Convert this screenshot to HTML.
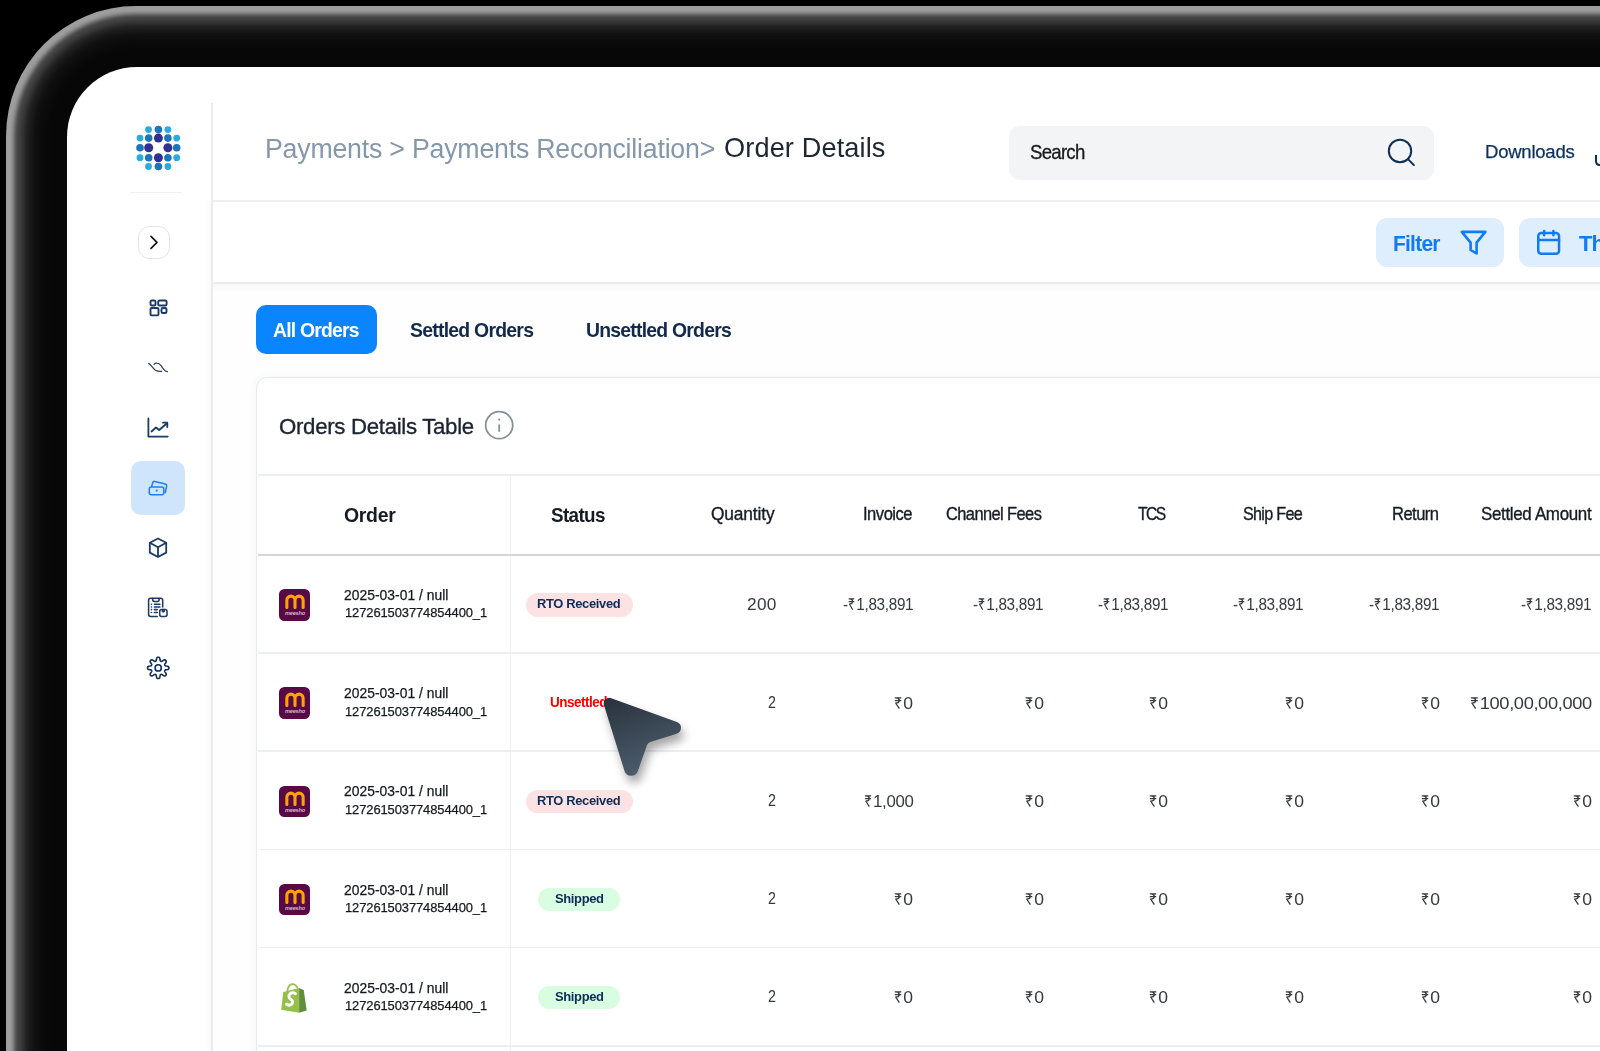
<!DOCTYPE html>
<html><head><meta charset="utf-8">
<style>
*{margin:0;padding:0;box-sizing:border-box}
html,body{width:1600px;height:1051px;overflow:hidden;background:#000;font-family:"Liberation Sans",sans-serif}
.a{position:absolute}
.sh{position:absolute;width:1800px;height:1300px}
.t{position:absolute;white-space:nowrap;line-height:1;transform-origin:0 0}
</style></head>
<body>
<div class="sh" style="left:6px;top:6px;border-radius:130px;background:rgb(158,158,158)"></div>
<div class="sh" style="left:14px;top:14px;border-radius:122px;background:rgb(68,68,68);filter:blur(2px)"></div>
<div class="sh" style="left:23px;top:23px;border-radius:113px;background:rgb(34,34,34);filter:blur(3px)"></div>
<div class="sh" style="left:31px;top:31px;border-radius:105px;background:rgb(14,14,14);filter:blur(4px)"></div>
<div class="sh" style="left:44px;top:44px;border-radius:92px;background:rgb(7,7,7);filter:blur(5px)"></div>
<div class="sh" style="left:67px;top:67px;border-radius:70px;background:#fff"></div>
<svg width="0" height="0" style="position:absolute"><defs>
<symbol id="rp" viewBox="0 0 7 12"><path d="M0.2 0.8 H6.8 M0.2 3.6 H6.8 M1.6 0.8 C5.6 0.8 6 6 1.2 6 L4.8 11.6" fill="none" stroke="currentColor" stroke-width="1.25" stroke-linejoin="round"/></symbol>
</defs></svg>
<div class="a" style="left:213px;top:200px;width:1400px;height:1.5px;background:#eceef1"></div>
<div class="t" style="left:264.5px;top:134.69px;font-size:27.18px;color:#8597aa;letter-spacing:-0.22px;transform:scaleX(0.9838);">Payments &gt; Payments Reconciliation&gt;</div>
<div class="t" style="left:723.7px;top:134.94px;font-size:26.89px;color:#1c2733;letter-spacing:0.13px;transform:scaleX(1.0098);">Order Details</div>
<div class="a" style="left:1009px;top:126px;width:425px;height:54px;border-radius:11px;background:#f2f4f6"></div>
<div class="t" style="left:1029.89px;top:141.58px;font-size:19.99px;color:#17191c;letter-spacing:-0.81px;transform:scaleX(0.9320);-webkit-text-stroke:0.3px #17191c;">Search</div>
<svg class="a" style="left:1384px;top:135px" width="36" height="36" fill="none" stroke="#0f2d55" stroke-width="2" stroke-linecap="round"><circle cx="16" cy="16" r="11.2"/><path d="M24.2 24.4 L29.9 30.1"/></svg>
<div class="t" style="left:1484.62px;top:142.81px;font-size:18.9px;color:#0d2f5e;letter-spacing:-0.23px;transform:scaleX(0.9797);-webkit-text-stroke:0.25px #0d2f5e;">Downloads</div>
<svg class="a" style="left:1590px;top:150px" width="12" height="20" fill="none" stroke="#0d2f5e" stroke-width="2"><path d="M6 5 V11 C6 13.5 7.5 15 10 15 C12.5 15 14 13.5 14 11 V5"/></svg>
<div class="a" style="left:213px;top:282px;width:1400px;height:1.5px;background:#e8eaed"></div>
<div class="a" style="left:213px;top:283.5px;width:1400px;height:800px;background:#fefefe"></div>
<div class="a" style="left:213px;top:283.5px;width:1400px;height:10px;background:linear-gradient(rgba(0,0,0,.022),rgba(0,0,0,0))"></div>
<div class="a" style="left:1376px;top:218px;width:128px;height:49px;border-radius:11px;background:#dfeefd"></div>
<svg class="a" style="left:1458px;top:228px" width="32" height="30" fill="none" stroke="#0f7bf5" stroke-width="2.6" stroke-linejoin="round"><path d="M3.8 3.9 H27.3 L18.6 14.6 V25.5 L12.6 22 V14.6 Z"/></svg>
<div class="a" style="left:1519px;top:218px;width:200px;height:49px;border-radius:11px;background:#dfeefd"></div>
<svg class="a" style="left:1534px;top:227px" width="30" height="30" fill="none" stroke="#0f7bf5" stroke-width="2.5" stroke-linecap="round" stroke-linejoin="round"><rect x="4.25" y="6" width="20.8" height="20.75" rx="3"/><path d="M4.25 13 H25.05 M10.1 4.1 V8.3 M19.4 4.1 V8.3"/></svg>
<div class="t" style="left:1392.7px;top:232.38px;font-size:22.82px;color:#0f7bf5;font-weight:bold;letter-spacing:-0.83px;transform:scaleX(0.9197);">Filter</div>
<div class="t" style="left:1579px;top:232.38px;font-size:22.82px;color:#0f7bf5;font-weight:bold;letter-spacing:-0.95px;transform:scaleX(0.9648);">Th</div>
<div class="a" style="left:256px;top:305px;width:121px;height:49px;border-radius:10px;background:#0a84ff"></div>
<div class="t" style="left:273px;top:319.16px;font-size:21.08px;color:#fff;font-weight:bold;letter-spacing:-0.85px;transform:scaleX(0.9188);">All Orders</div>
<div class="t" style="left:410px;top:319.16px;font-size:21.08px;color:#10294d;font-weight:bold;letter-spacing:-0.82px;transform:scaleX(0.9210);">Settled Orders</div>
<div class="t" style="left:586px;top:319.16px;font-size:21.08px;color:#10294d;font-weight:bold;letter-spacing:-0.84px;transform:scaleX(0.9202);">Unsettled Orders</div>
<div class="a" style="left:256px;top:376.5px;width:1500px;height:800px;border-radius:11px;background:#fff;border:1px solid #e6e9ee;box-shadow:0 0 10px rgba(30,50,80,.05)"></div>
<svg class="a" style="left:482px;top:408px" width="34" height="34" fill="none" stroke="#858e99" stroke-width="1.75" stroke-linecap="round"><circle cx="17.2" cy="17.2" r="13.5"/><path d="M17.2 17.2 V23"/><circle cx="17.2" cy="11.6" r="1.1" fill="#858e99" stroke="none"/></svg>
<div class="a" style="left:258px;top:474px;width:1400px;height:1.5px;background:#eceef1"></div>
<div class="a" style="left:509.5px;top:475px;width:1.3px;height:600px;background:#eff1f3"></div>
<div class="a" style="left:258px;top:554px;width:1400px;height:2px;background:#d3d7dc"></div>
<div class="t" style="left:278.92px;top:415.12px;font-size:22.89px;color:#1c2430;letter-spacing:-0.31px;transform:scaleX(0.9712);-webkit-text-stroke:0.35px #1c2430;">Orders Details Table</div>
<div class="t" style="left:343.75px;top:504.83px;font-size:19.99px;color:#161c24;font-weight:bold;letter-spacing:-0.33px;transform:scaleX(0.9749);">Order</div>
<div class="t" style="left:551px;top:504.83px;font-size:19.99px;color:#161c24;font-weight:bold;letter-spacing:-0.66px;transform:scaleX(0.9433);">Status</div>
<div class="t" style="left:711.17px;top:506.11px;font-size:17.59px;color:#161c24;letter-spacing:-0.13px;transform:scaleX(0.9857);-webkit-text-stroke:0.35px #161c24;">Quantity</div>
<div class="t" style="left:862.56px;top:506.11px;font-size:17.59px;color:#161c24;letter-spacing:-0.51px;transform:scaleX(0.9419);-webkit-text-stroke:0.35px #161c24;">Invoice</div>
<div class="t" style="left:946.06px;top:506.11px;font-size:17.59px;color:#161c24;letter-spacing:-0.62px;transform:scaleX(0.9342);-webkit-text-stroke:0.35px #161c24;">Channel Fees</div>
<div class="t" style="left:1138.16px;top:506.11px;font-size:17.59px;color:#161c24;letter-spacing:-1.73px;transform:scaleX(0.8920);-webkit-text-stroke:0.35px #161c24;">TCS</div>
<div class="t" style="left:1243.16px;top:506.11px;font-size:17.59px;color:#161c24;letter-spacing:-0.77px;transform:scaleX(0.9178);-webkit-text-stroke:0.35px #161c24;">Ship Fee</div>
<div class="t" style="left:1391.76px;top:506.11px;font-size:17.59px;color:#161c24;letter-spacing:-0.58px;transform:scaleX(0.9428);-webkit-text-stroke:0.35px #161c24;">Return</div>
<div class="t" style="left:1481.17px;top:506.11px;font-size:17.59px;color:#161c24;letter-spacing:-0.33px;transform:scaleX(0.9626);-webkit-text-stroke:0.35px #161c24;">Settled Amount</div>
<div class="a" style="left:258px;top:1045px;width:1400px;height:1.5px;background:#eceef1"></div>
<div class="a" style="left:278.5px;top:589.2px;width:31.8px;height:31.6px;border-radius:5.5px;background:#570a45"></div>
<svg class="a" style="left:278.5px;top:589.2px" width="32" height="32"><path d="M7.85 18.5 V11.2 A4.07 4.07 0 0 1 16 11.2 V18.5 M16 11.2 A4.07 4.07 0 0 1 24.15 11.2 V18.5" fill="none" stroke="#ffa300" stroke-width="3.1" stroke-linecap="round"/><text x="16" y="25.6" font-size="5.6" font-style="italic" font-weight="bold" font-family="Liberation Sans" fill="#d9b3cc" text-anchor="middle" letter-spacing="-.2">meesho</text></svg>
<div class="t" style="left:343.93px;top:589.01px;font-size:13.81px;color:#15191f;letter-spacing:0.03px;transform:scaleX(1.0039);-webkit-text-stroke:0.25px #15191f;">2025-03-01 / null</div>
<div class="t" style="left:344.62px;top:606.43px;font-size:13.08px;color:#15191f;letter-spacing:-0.09px;transform:scaleX(0.9887);-webkit-text-stroke:0.25px #15191f;">127261503774854400_1</div>
<div class="a" style="left:525.6px;top:593.25px;width:107.3px;height:23.6px;border-radius:12px;background:#fde2e4"></div>
<div class="t" style="left:537.4px;top:597.1px;font-size:13.59px;color:#0c2d5a;font-weight:bold;letter-spacing:-0.37px;transform:scaleX(0.9533);">RTO Received</div>
<div class="t" style="left:746.6px;top:596.53px;font-size:16.86px;color:#353a40;letter-spacing:0.32px;transform:scaleX(1.0223);">200</div>
<div class="t" style="right:687px;top:596.41px;font-size:17px;color:#353a40;letter-spacing:-.35px;transform-origin:100% 0;transform:scaleX(0.8987)"><span>-</span><svg width="7" height="12" style="display:inline-block;vertical-align:baseline;margin-right:1.8px;margin-left:.8px;color:#353a40"><use href="#rp"/></svg><span>1,83,891</span></div>
<div class="t" style="right:556.7px;top:596.41px;font-size:17px;color:#353a40;letter-spacing:-.35px;transform-origin:100% 0;transform:scaleX(0.8987)"><span>-</span><svg width="7" height="12" style="display:inline-block;vertical-align:baseline;margin-right:1.8px;margin-left:.8px;color:#353a40"><use href="#rp"/></svg><span>1,83,891</span></div>
<div class="t" style="right:432px;top:596.41px;font-size:17px;color:#353a40;letter-spacing:-.35px;transform-origin:100% 0;transform:scaleX(0.8987)"><span>-</span><svg width="7" height="12" style="display:inline-block;vertical-align:baseline;margin-right:1.8px;margin-left:.8px;color:#353a40"><use href="#rp"/></svg><span>1,83,891</span></div>
<div class="t" style="right:296.25px;top:596.41px;font-size:17px;color:#353a40;letter-spacing:-.35px;transform-origin:100% 0;transform:scaleX(0.8987)"><span>-</span><svg width="7" height="12" style="display:inline-block;vertical-align:baseline;margin-right:1.8px;margin-left:.8px;color:#353a40"><use href="#rp"/></svg><span>1,83,891</span></div>
<div class="t" style="right:160.3px;top:596.41px;font-size:17px;color:#353a40;letter-spacing:-.35px;transform-origin:100% 0;transform:scaleX(0.8987)"><span>-</span><svg width="7" height="12" style="display:inline-block;vertical-align:baseline;margin-right:1.8px;margin-left:.8px;color:#353a40"><use href="#rp"/></svg><span>1,83,891</span></div>
<div class="t" style="right:8.4px;top:596.41px;font-size:17px;color:#353a40;letter-spacing:-.35px;transform-origin:100% 0;transform:scaleX(0.8987)"><span>-</span><svg width="7" height="12" style="display:inline-block;vertical-align:baseline;margin-right:1.8px;margin-left:.8px;color:#353a40"><use href="#rp"/></svg><span>1,83,891</span></div>
<div class="a" style="left:258px;top:652.2px;width:1400px;height:1.5px;background:#eceef1"></div>
<div class="a" style="left:278.5px;top:687.4px;width:31.8px;height:31.6px;border-radius:5.5px;background:#570a45"></div>
<svg class="a" style="left:278.5px;top:687.4px" width="32" height="32"><path d="M7.85 18.5 V11.2 A4.07 4.07 0 0 1 16 11.2 V18.5 M16 11.2 A4.07 4.07 0 0 1 24.15 11.2 V18.5" fill="none" stroke="#ffa300" stroke-width="3.1" stroke-linecap="round"/><text x="16" y="25.6" font-size="5.6" font-style="italic" font-weight="bold" font-family="Liberation Sans" fill="#d9b3cc" text-anchor="middle" letter-spacing="-.2">meesho</text></svg>
<div class="t" style="left:343.93px;top:687.21px;font-size:13.81px;color:#15191f;letter-spacing:0.03px;transform:scaleX(1.0039);-webkit-text-stroke:0.25px #15191f;">2025-03-01 / null</div>
<div class="t" style="left:344.62px;top:704.63px;font-size:13.08px;color:#15191f;letter-spacing:-0.09px;transform:scaleX(0.9887);-webkit-text-stroke:0.25px #15191f;">127261503774854400_1</div>
<div class="t" style="left:550px;top:694.95px;font-size:14.53px;color:#ff0000;font-weight:bold;letter-spacing:-0.55px;transform:scaleX(0.9293);">Unsettled</div>
<div class="t" style="left:768.1px;top:694.73px;font-size:16.86px;color:#353a40;letter-spacing:-0.73px;transform:scaleX(0.8442);">2</div>
<div class="t" style="right:686.98px;top:694.61px;font-size:17px;color:#353a40;letter-spacing:-.35px;transform-origin:100% 0;transform:scaleX(1.0333)"><svg width="7" height="12" style="display:inline-block;vertical-align:baseline;margin-right:1.8px;margin-left:.8px;color:#353a40"><use href="#rp"/></svg><span>0</span></div>
<div class="t" style="right:556.68px;top:694.61px;font-size:17px;color:#353a40;letter-spacing:-.35px;transform-origin:100% 0;transform:scaleX(1.0333)"><svg width="7" height="12" style="display:inline-block;vertical-align:baseline;margin-right:1.8px;margin-left:.8px;color:#353a40"><use href="#rp"/></svg><span>0</span></div>
<div class="t" style="right:431.98px;top:694.61px;font-size:17px;color:#353a40;letter-spacing:-.35px;transform-origin:100% 0;transform:scaleX(1.0333)"><svg width="7" height="12" style="display:inline-block;vertical-align:baseline;margin-right:1.8px;margin-left:.8px;color:#353a40"><use href="#rp"/></svg><span>0</span></div>
<div class="t" style="right:296.23px;top:694.61px;font-size:17px;color:#353a40;letter-spacing:-.35px;transform-origin:100% 0;transform:scaleX(1.0333)"><svg width="7" height="12" style="display:inline-block;vertical-align:baseline;margin-right:1.8px;margin-left:.8px;color:#353a40"><use href="#rp"/></svg><span>0</span></div>
<div class="t" style="right:160.28px;top:694.61px;font-size:17px;color:#353a40;letter-spacing:-.35px;transform-origin:100% 0;transform:scaleX(1.0333)"><svg width="7" height="12" style="display:inline-block;vertical-align:baseline;margin-right:1.8px;margin-left:.8px;color:#353a40"><use href="#rp"/></svg><span>0</span></div>
<div class="t" style="right:8.4px;top:694.61px;font-size:17px;color:#353a40;letter-spacing:-.35px;transform-origin:100% 0;transform:scaleX(1.0750)"><svg width="7" height="12" style="display:inline-block;vertical-align:baseline;margin-right:1.8px;margin-left:.8px;color:#353a40"><use href="#rp"/></svg><span>100,00,00,000</span></div>
<div class="a" style="left:258px;top:750.4px;width:1400px;height:1.5px;background:#eceef1"></div>
<div class="a" style="left:278.5px;top:785.6px;width:31.8px;height:31.6px;border-radius:5.5px;background:#570a45"></div>
<svg class="a" style="left:278.5px;top:785.6px" width="32" height="32"><path d="M7.85 18.5 V11.2 A4.07 4.07 0 0 1 16 11.2 V18.5 M16 11.2 A4.07 4.07 0 0 1 24.15 11.2 V18.5" fill="none" stroke="#ffa300" stroke-width="3.1" stroke-linecap="round"/><text x="16" y="25.6" font-size="5.6" font-style="italic" font-weight="bold" font-family="Liberation Sans" fill="#d9b3cc" text-anchor="middle" letter-spacing="-.2">meesho</text></svg>
<div class="t" style="left:343.93px;top:785.41px;font-size:13.81px;color:#15191f;letter-spacing:0.03px;transform:scaleX(1.0039);-webkit-text-stroke:0.25px #15191f;">2025-03-01 / null</div>
<div class="t" style="left:344.62px;top:802.83px;font-size:13.08px;color:#15191f;letter-spacing:-0.09px;transform:scaleX(0.9887);-webkit-text-stroke:0.25px #15191f;">127261503774854400_1</div>
<div class="a" style="left:525.6px;top:789.65px;width:107.3px;height:23.6px;border-radius:12px;background:#fde2e4"></div>
<div class="t" style="left:537.4px;top:793.5px;font-size:13.59px;color:#0c2d5a;font-weight:bold;letter-spacing:-0.37px;transform:scaleX(0.9533);">RTO Received</div>
<div class="t" style="left:768.1px;top:792.93px;font-size:16.86px;color:#353a40;letter-spacing:-0.73px;transform:scaleX(0.8442);">2</div>
<div class="t" style="right:687px;top:792.81px;font-size:17px;color:#353a40;letter-spacing:-.35px;transform-origin:100% 0;transform:scaleX(0.9880)"><svg width="7" height="12" style="display:inline-block;vertical-align:baseline;margin-right:1.8px;margin-left:.8px;color:#353a40"><use href="#rp"/></svg><span>1,000</span></div>
<div class="t" style="right:556.68px;top:792.81px;font-size:17px;color:#353a40;letter-spacing:-.35px;transform-origin:100% 0;transform:scaleX(1.0333)"><svg width="7" height="12" style="display:inline-block;vertical-align:baseline;margin-right:1.8px;margin-left:.8px;color:#353a40"><use href="#rp"/></svg><span>0</span></div>
<div class="t" style="right:431.98px;top:792.81px;font-size:17px;color:#353a40;letter-spacing:-.35px;transform-origin:100% 0;transform:scaleX(1.0333)"><svg width="7" height="12" style="display:inline-block;vertical-align:baseline;margin-right:1.8px;margin-left:.8px;color:#353a40"><use href="#rp"/></svg><span>0</span></div>
<div class="t" style="right:296.23px;top:792.81px;font-size:17px;color:#353a40;letter-spacing:-.35px;transform-origin:100% 0;transform:scaleX(1.0333)"><svg width="7" height="12" style="display:inline-block;vertical-align:baseline;margin-right:1.8px;margin-left:.8px;color:#353a40"><use href="#rp"/></svg><span>0</span></div>
<div class="t" style="right:160.28px;top:792.81px;font-size:17px;color:#353a40;letter-spacing:-.35px;transform-origin:100% 0;transform:scaleX(1.0333)"><svg width="7" height="12" style="display:inline-block;vertical-align:baseline;margin-right:1.8px;margin-left:.8px;color:#353a40"><use href="#rp"/></svg><span>0</span></div>
<div class="t" style="right:8.38px;top:792.81px;font-size:17px;color:#353a40;letter-spacing:-.35px;transform-origin:100% 0;transform:scaleX(1.0333)"><svg width="7" height="12" style="display:inline-block;vertical-align:baseline;margin-right:1.8px;margin-left:.8px;color:#353a40"><use href="#rp"/></svg><span>0</span></div>
<div class="a" style="left:258px;top:848.6px;width:1400px;height:1.5px;background:#eceef1"></div>
<div class="a" style="left:278.5px;top:883.8px;width:31.8px;height:31.6px;border-radius:5.5px;background:#570a45"></div>
<svg class="a" style="left:278.5px;top:883.8px" width="32" height="32"><path d="M7.85 18.5 V11.2 A4.07 4.07 0 0 1 16 11.2 V18.5 M16 11.2 A4.07 4.07 0 0 1 24.15 11.2 V18.5" fill="none" stroke="#ffa300" stroke-width="3.1" stroke-linecap="round"/><text x="16" y="25.6" font-size="5.6" font-style="italic" font-weight="bold" font-family="Liberation Sans" fill="#d9b3cc" text-anchor="middle" letter-spacing="-.2">meesho</text></svg>
<div class="t" style="left:343.93px;top:883.61px;font-size:13.81px;color:#15191f;letter-spacing:0.03px;transform:scaleX(1.0039);-webkit-text-stroke:0.25px #15191f;">2025-03-01 / null</div>
<div class="t" style="left:344.62px;top:901.03px;font-size:13.08px;color:#15191f;letter-spacing:-0.09px;transform:scaleX(0.9887);-webkit-text-stroke:0.25px #15191f;">127261503774854400_1</div>
<div class="a" style="left:538.4px;top:888px;width:81.7px;height:23.2px;border-radius:12px;background:#d9fde0"></div>
<div class="t" style="left:555.3px;top:891.85px;font-size:13.59px;color:#0c2d5a;font-weight:bold;letter-spacing:-0.38px;transform:scaleX(0.9561);">Shipped</div>
<div class="t" style="left:768.1px;top:891.13px;font-size:16.86px;color:#353a40;letter-spacing:-0.73px;transform:scaleX(0.8442);">2</div>
<div class="t" style="right:686.98px;top:891.01px;font-size:17px;color:#353a40;letter-spacing:-.35px;transform-origin:100% 0;transform:scaleX(1.0333)"><svg width="7" height="12" style="display:inline-block;vertical-align:baseline;margin-right:1.8px;margin-left:.8px;color:#353a40"><use href="#rp"/></svg><span>0</span></div>
<div class="t" style="right:556.68px;top:891.01px;font-size:17px;color:#353a40;letter-spacing:-.35px;transform-origin:100% 0;transform:scaleX(1.0333)"><svg width="7" height="12" style="display:inline-block;vertical-align:baseline;margin-right:1.8px;margin-left:.8px;color:#353a40"><use href="#rp"/></svg><span>0</span></div>
<div class="t" style="right:431.98px;top:891.01px;font-size:17px;color:#353a40;letter-spacing:-.35px;transform-origin:100% 0;transform:scaleX(1.0333)"><svg width="7" height="12" style="display:inline-block;vertical-align:baseline;margin-right:1.8px;margin-left:.8px;color:#353a40"><use href="#rp"/></svg><span>0</span></div>
<div class="t" style="right:296.23px;top:891.01px;font-size:17px;color:#353a40;letter-spacing:-.35px;transform-origin:100% 0;transform:scaleX(1.0333)"><svg width="7" height="12" style="display:inline-block;vertical-align:baseline;margin-right:1.8px;margin-left:.8px;color:#353a40"><use href="#rp"/></svg><span>0</span></div>
<div class="t" style="right:160.28px;top:891.01px;font-size:17px;color:#353a40;letter-spacing:-.35px;transform-origin:100% 0;transform:scaleX(1.0333)"><svg width="7" height="12" style="display:inline-block;vertical-align:baseline;margin-right:1.8px;margin-left:.8px;color:#353a40"><use href="#rp"/></svg><span>0</span></div>
<div class="t" style="right:8.38px;top:891.01px;font-size:17px;color:#353a40;letter-spacing:-.35px;transform-origin:100% 0;transform:scaleX(1.0333)"><svg width="7" height="12" style="display:inline-block;vertical-align:baseline;margin-right:1.8px;margin-left:.8px;color:#353a40"><use href="#rp"/></svg><span>0</span></div>
<div class="a" style="left:258px;top:946.8px;width:1400px;height:1.5px;background:#eceef1"></div>
<svg class="a" style="left:278px;top:983.1px" width="32" height="34" viewBox="0 0 32 34">
<path d="M5.3 8.9 L21.1 4.9 V29.8 L3.2 26.8 Z" fill="#95bf47"/><path d="M21.1 4.9 L25.7 7 L28.7 27.6 L21.1 29.8 Z" fill="#5e8e3e"/>
<path d="M9.3 8 C10 3.5 12.5 1.2 14.3 1.1 C16.5 1 18.5 2.7 19.8 5.3" fill="none" stroke="#95bf47" stroke-width="1.6"/>
<path d="M17.3 10.6 C16 9.8 13.6 9.6 12 10.9 C10 12.6 11 15 12.9 16.3 C14.8 17.6 15 19.6 13.6 21.1 C12.3 22.5 10 22.1 8.6 21.2" fill="none" stroke="#fff" stroke-width="3" stroke-linecap="round"/>
</svg>
<div class="t" style="left:343.93px;top:981.81px;font-size:13.81px;color:#15191f;letter-spacing:0.03px;transform:scaleX(1.0039);-webkit-text-stroke:0.25px #15191f;">2025-03-01 / null</div>
<div class="t" style="left:344.62px;top:999.23px;font-size:13.08px;color:#15191f;letter-spacing:-0.09px;transform:scaleX(0.9887);-webkit-text-stroke:0.25px #15191f;">127261503774854400_1</div>
<div class="a" style="left:538.4px;top:986.2px;width:81.7px;height:23.2px;border-radius:12px;background:#d9fde0"></div>
<div class="t" style="left:555.3px;top:990.05px;font-size:13.59px;color:#0c2d5a;font-weight:bold;letter-spacing:-0.38px;transform:scaleX(0.9561);">Shipped</div>
<div class="t" style="left:768.1px;top:989.33px;font-size:16.86px;color:#353a40;letter-spacing:-0.73px;transform:scaleX(0.8442);">2</div>
<div class="t" style="right:686.98px;top:989.21px;font-size:17px;color:#353a40;letter-spacing:-.35px;transform-origin:100% 0;transform:scaleX(1.0333)"><svg width="7" height="12" style="display:inline-block;vertical-align:baseline;margin-right:1.8px;margin-left:.8px;color:#353a40"><use href="#rp"/></svg><span>0</span></div>
<div class="t" style="right:556.68px;top:989.21px;font-size:17px;color:#353a40;letter-spacing:-.35px;transform-origin:100% 0;transform:scaleX(1.0333)"><svg width="7" height="12" style="display:inline-block;vertical-align:baseline;margin-right:1.8px;margin-left:.8px;color:#353a40"><use href="#rp"/></svg><span>0</span></div>
<div class="t" style="right:431.98px;top:989.21px;font-size:17px;color:#353a40;letter-spacing:-.35px;transform-origin:100% 0;transform:scaleX(1.0333)"><svg width="7" height="12" style="display:inline-block;vertical-align:baseline;margin-right:1.8px;margin-left:.8px;color:#353a40"><use href="#rp"/></svg><span>0</span></div>
<div class="t" style="right:296.23px;top:989.21px;font-size:17px;color:#353a40;letter-spacing:-.35px;transform-origin:100% 0;transform:scaleX(1.0333)"><svg width="7" height="12" style="display:inline-block;vertical-align:baseline;margin-right:1.8px;margin-left:.8px;color:#353a40"><use href="#rp"/></svg><span>0</span></div>
<div class="t" style="right:160.28px;top:989.21px;font-size:17px;color:#353a40;letter-spacing:-.35px;transform-origin:100% 0;transform:scaleX(1.0333)"><svg width="7" height="12" style="display:inline-block;vertical-align:baseline;margin-right:1.8px;margin-left:.8px;color:#353a40"><use href="#rp"/></svg><span>0</span></div>
<div class="t" style="right:8.38px;top:989.21px;font-size:17px;color:#353a40;letter-spacing:-.35px;transform-origin:100% 0;transform:scaleX(1.0333)"><svg width="7" height="12" style="display:inline-block;vertical-align:baseline;margin-right:1.8px;margin-left:.8px;color:#353a40"><use href="#rp"/></svg><span>0</span></div>
<!-- sidebar -->
<div class="a" style="left:203px;top:201px;width:8px;height:860px;background:linear-gradient(90deg,rgba(0,0,0,0),rgba(0,0,0,.02))"></div>
<div class="a" style="left:211px;top:103px;width:2px;height:960px;background:#e9ebee"></div>
<svg class="a" style="left:130px;top:120px" width="56" height="56"><circle cx="18.5" cy="9.599999999999994" r="3.4" fill="#29abe2"/><circle cx="28.400000000000006" cy="9.599999999999994" r="3.8" fill="#1b75bc"/><circle cx="37.900000000000006" cy="9.599999999999994" r="3.4" fill="#29abe2"/><circle cx="10" cy="18.099999999999994" r="3.4" fill="#29abe2"/><circle cx="18.69999999999999" cy="18.099999999999994" r="3.8" fill="#1b75bc"/><circle cx="28.400000000000006" cy="18.099999999999994" r="4.5" fill="#2e3192"/><circle cx="37.900000000000006" cy="18.099999999999994" r="3.8" fill="#1b75bc"/><circle cx="46.69999999999999" cy="18.099999999999994" r="3.4" fill="#29abe2"/><circle cx="10" cy="27.80000000000001" r="3.8" fill="#1b75bc"/><circle cx="18.69999999999999" cy="27.80000000000001" r="4.5" fill="#2e3192"/><circle cx="37.900000000000006" cy="27.80000000000001" r="4.5" fill="#2e3192"/><circle cx="46.69999999999999" cy="27.80000000000001" r="3.8" fill="#1b75bc"/><circle cx="10" cy="37.69999999999999" r="3.4" fill="#29abe2"/><circle cx="18.69999999999999" cy="37.69999999999999" r="3.8" fill="#1b75bc"/><circle cx="28.400000000000006" cy="37.69999999999999" r="4.5" fill="#2e3192"/><circle cx="37.900000000000006" cy="37.69999999999999" r="3.8" fill="#1b75bc"/><circle cx="46.69999999999999" cy="37.69999999999999" r="3.4" fill="#29abe2"/><circle cx="18.5" cy="46.5" r="3.4" fill="#29abe2"/><circle cx="28.400000000000006" cy="46.5" r="3.8" fill="#1b75bc"/><circle cx="37.900000000000006" cy="46.5" r="3.4" fill="#29abe2"/></svg>
<div class="a" style="left:130px;top:192px;width:52px;height:1px;background:#eef0f2"></div>
<div class="a" style="left:138.2px;top:226.2px;width:31.8px;height:32.4px;border:1.4px solid #e3e5e8;border-radius:11.5px;background:#fff"></div>
<svg class="a" style="left:138px;top:226px" width="32" height="32"><path d="M13 10.4 L19 16.4 L13 22.4" fill="none" stroke="#111" stroke-width="1.6" stroke-linecap="round" stroke-linejoin="round"/></svg>
<svg class="a" style="left:146px;top:296px" width="24" height="24" fill="none" stroke="#1b3a66" stroke-width="1.9">
 <rect x="4.5" y="4.5" width="5" height="5" rx="1.3"/><rect x="12.2" y="4.5" width="8.4" height="5" rx="1.3"/>
 <rect x="4.5" y="12" width="8" height="7.4" rx="1.3"/><rect x="15.5" y="12" width="5" height="5" rx="1.3"/>
</svg>
<svg class="a" style="left:146px;top:356px" width="24" height="24" fill="none" stroke-width="1.25" stroke-linecap="round">
 <path d="M2.6 7.4 C5 8.5 6.6 12.3 9.4 14.2 C11.3 15.3 13.5 15.5 15.7 15.3" stroke="#3a3f47"/><path d="M8 8.4 C9.5 6.9 12.6 6.6 14.6 9.1 C15.8 10.6 16.7 12.2 17.7 13.3 C18.7 14.6 20 15.4 21.4 15.7" stroke="#1f4372"/>
</svg>
<svg class="a" style="left:146px;top:416px" width="24" height="24" fill="none" stroke="#1b3a66" stroke-width="1.8" stroke-linecap="round" stroke-linejoin="round">
 <path d="M2.4 2.5 V20.6 H21.7"/><path d="M5.5 15.5 L10 11.5 L13.2 14 L21 7.2"/><path d="M17 6.7 H21.3 V11"/>
</svg>
<div class="a" style="left:131px;top:461px;width:54px;height:54px;border-radius:10px;background:#cfe5fc"></div>
<svg class="a" style="left:146px;top:476px" width="24" height="24" fill="none" stroke="#1a80fb" stroke-width="1.55" stroke-linejoin="round" stroke-linecap="round">
 <path d="M5.5 10.9 L6.8 6.6 C7.1 5.6 7.9 5.1 8.9 5.4 L19.3 8.1 C20.3 8.4 20.8 9.2 20.6 10.2 L19.3 16.6"/>
 <rect x="3.3" y="10.95" width="14.5" height="7.8" rx="2" fill="#cfe5fc"/>
 <circle cx="10.8" cy="14.6" r="1.1" fill="#1a80fb" stroke="none"/>
</svg>
<svg class="a" style="left:146px;top:536px" width="24" height="24" fill="none" stroke="#1b3a66" stroke-width="1.8" stroke-linejoin="round">
 <path d="M12 2.5 L20.2 6.8 V16.6 L12 21 L3.8 16.6 V6.8 Z"/><path d="M3.8 6.8 L12 11.2 L20.2 6.8 M12 11.2 V21"/>
</svg>
<svg class="a" style="left:146px;top:596px" width="24" height="24" fill="none" stroke="#1b3a66" stroke-width="1.55" stroke-linejoin="round" stroke-linecap="round">
 <path d="M11.2 20.4 H4.6 C3.3 20.4 2.6 19.6 2.6 18.3 V4.4 C2.6 3 3.3 2.3 4.6 2.3 H14.7 C16 2.3 16.7 3 16.7 4.4 V10.9"/>
 <path d="M6.5 2.6 C6.6 4.4 7.1 5.4 8.2 5.4 H11.7 C12.7 5.4 13.2 4.4 13.3 2.6"/>
 <path d="M5.4 8.2 H5.5 M8.4 8.2 H13.9 M5.4 11 H5.5 M8.4 11 H13.9 M5.4 13.6 H5.5 M8.4 13.6 H11.3 M5.4 16.4 H5.5 M8.4 16.4 H11.3"/>
 <rect x="13.7" y="13.4" width="7.3" height="7" rx="1.8"/><path d="M16.4 13.6 V15.4 L17.3 15.9 L18.2 15.4 V13.6"/>
</svg>
<svg class="a" style="left:146px;top:656px" width="24" height="24" fill="none" stroke="#0f2e5c" stroke-width="1.6" stroke-linejoin="round">
 <path d="M12.20 1.25 L12.53 1.27 L12.86 1.34 L13.18 1.48 L13.48 1.76 L13.73 2.25 L13.90 2.97 L14.02 3.75 L14.13 4.37 L14.28 4.76 L14.45 4.99 L14.63 5.14 L14.83 5.25 L15.04 5.33 L15.26 5.40 L15.50 5.43 L15.78 5.38 L16.16 5.21 L16.67 4.85 L17.31 4.38 L17.94 4.00 L18.46 3.83 L18.87 3.84 L19.20 3.96 L19.48 4.15 L19.73 4.37 L19.95 4.62 L20.14 4.90 L20.26 5.23 L20.27 5.64 L20.10 6.16 L19.72 6.79 L19.25 7.43 L18.89 7.94 L18.72 8.32 L18.67 8.60 L18.70 8.84 L18.77 9.06 L18.85 9.27 L18.96 9.47 L19.11 9.65 L19.34 9.82 L19.73 9.97 L20.35 10.08 L21.13 10.20 L21.85 10.37 L22.34 10.62 L22.62 10.92 L22.76 11.24 L22.83 11.57 L22.85 11.90 L22.83 12.23 L22.76 12.56 L22.62 12.88 L22.34 13.18 L21.85 13.43 L21.13 13.60 L20.35 13.72 L19.73 13.83 L19.34 13.98 L19.11 14.15 L18.96 14.33 L18.85 14.53 L18.77 14.74 L18.70 14.96 L18.67 15.20 L18.72 15.48 L18.89 15.86 L19.25 16.37 L19.72 17.01 L20.10 17.64 L20.27 18.16 L20.26 18.57 L20.14 18.90 L19.95 19.18 L19.73 19.43 L19.48 19.65 L19.20 19.84 L18.87 19.96 L18.46 19.97 L17.94 19.80 L17.31 19.42 L16.67 18.95 L16.16 18.59 L15.78 18.42 L15.50 18.37 L15.26 18.40 L15.04 18.47 L14.83 18.55 L14.63 18.66 L14.45 18.81 L14.28 19.04 L14.13 19.43 L14.02 20.05 L13.90 20.83 L13.73 21.55 L13.48 22.04 L13.18 22.32 L12.86 22.46 L12.53 22.53 L12.20 22.55 L11.87 22.53 L11.54 22.46 L11.22 22.32 L10.92 22.04 L10.67 21.55 L10.50 20.83 L10.38 20.05 L10.27 19.43 L10.12 19.04 L9.95 18.81 L9.77 18.66 L9.57 18.55 L9.36 18.47 L9.14 18.40 L8.90 18.37 L8.62 18.42 L8.24 18.59 L7.73 18.95 L7.09 19.42 L6.46 19.80 L5.94 19.97 L5.53 19.96 L5.20 19.84 L4.92 19.65 L4.67 19.43 L4.45 19.18 L4.26 18.90 L4.14 18.57 L4.13 18.16 L4.30 17.64 L4.68 17.01 L5.15 16.37 L5.51 15.86 L5.68 15.48 L5.73 15.20 L5.70 14.96 L5.63 14.74 L5.55 14.53 L5.44 14.33 L5.29 14.15 L5.06 13.98 L4.67 13.83 L4.05 13.72 L3.27 13.60 L2.55 13.43 L2.06 13.18 L1.78 12.88 L1.64 12.56 L1.57 12.23 L1.55 11.90 L1.57 11.57 L1.64 11.24 L1.78 10.92 L2.06 10.62 L2.55 10.37 L3.27 10.20 L4.05 10.08 L4.67 9.97 L5.06 9.82 L5.29 9.65 L5.44 9.47 L5.55 9.27 L5.63 9.06 L5.70 8.84 L5.73 8.60 L5.68 8.32 L5.51 7.94 L5.15 7.43 L4.68 6.79 L4.30 6.16 L4.13 5.64 L4.14 5.23 L4.26 4.90 L4.45 4.62 L4.67 4.37 L4.92 4.15 L5.20 3.96 L5.53 3.84 L5.94 3.83 L6.46 4.00 L7.09 4.38 L7.73 4.85 L8.24 5.21 L8.62 5.38 L8.90 5.43 L9.14 5.40 L9.36 5.33 L9.57 5.25 L9.77 5.14 L9.95 4.99 L10.12 4.76 L10.27 4.37 L10.38 3.75 L10.50 2.97 L10.67 2.25 L10.92 1.76 L11.22 1.48 L11.54 1.34 L11.87 1.27 Z"/>
 <circle cx="12.2" cy="11.9" r="3.1"/>
</svg>
<svg class="a" style="left:580px;top:680px;overflow:visible" width="130" height="130"><defs><linearGradient id="cg" x1="0" y1="0" x2=".35" y2="1"><stop offset="0" stop-color="#29323c"/><stop offset="1" stop-color="#4b5b6c"/></linearGradient><filter id="cs" x="-50%" y="-50%" width="200%" height="200%"><feGaussianBlur stdDeviation="5"/></filter></defs><path d="M31.25 18.26 L96.91 41.90 A6.2 6.2 0 0 1 96.66 53.65 L70.25 61.88 A5.0 5.0 0 0 0 67.02 65.00 L57.90 90.90 A7.1 7.1 0 0 1 44.43 90.66 L24.00 25.19 A5.6 5.6 0 0 1 31.25 18.26 Z" fill="rgba(0,0,0,.35)" transform="translate(3,7)" filter="url(#cs)"/><path d="M31.25 18.26 L96.91 41.90 A6.2 6.2 0 0 1 96.66 53.65 L70.25 61.88 A5.0 5.0 0 0 0 67.02 65.00 L57.90 90.90 A7.1 7.1 0 0 1 44.43 90.66 L24.00 25.19 A5.6 5.6 0 0 1 31.25 18.26 Z" fill="url(#cg)"/></svg>
</body></html>
